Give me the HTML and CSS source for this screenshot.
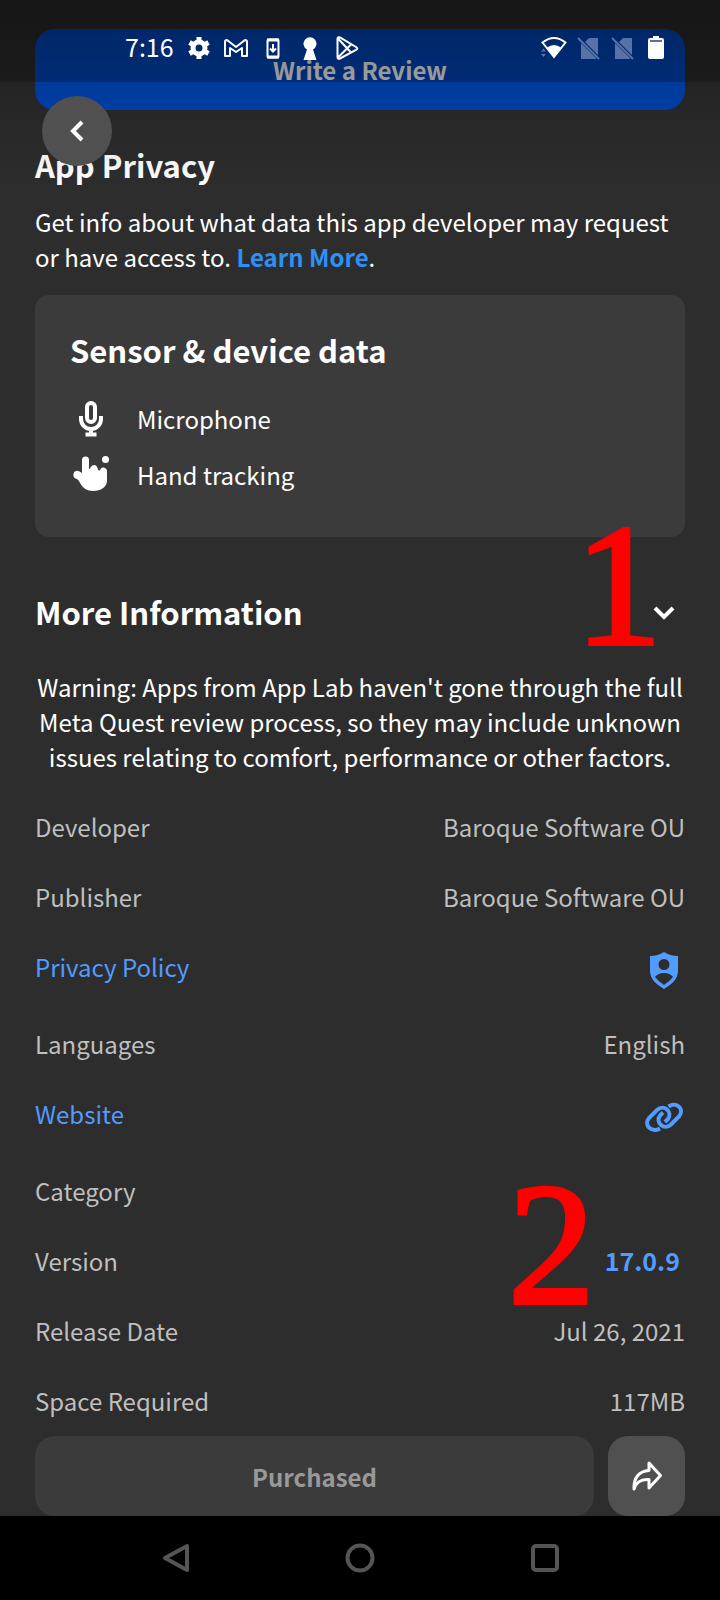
FILE: index.html
```html
<!DOCTYPE html>
<html lang="en">
<head>
<meta charset="utf-8">
<meta name="viewport" content="width=device-width, initial-scale=1">
<title>App details</title>
<link rel="stylesheet" href="styles.css">
</head>
<body>
<div class="screen">
  <main class="content">
    <button class="review" type="button">Write a Review</button>

    <section class="privacy">
      <h2 class="heading">App Privacy</h2>
      <p class="intro">Get info about what data this app developer may request or have access to. <a class="learn" href="#">Learn More</a>.</p>
      <div class="card">
        <h3 class="heading">Sensor &amp; device data</h3>
        <ul class="sensors">
          <li class="sensor">
            <svg class="sensor-icon" viewBox="0 0 42 42" aria-hidden="true"><g fill="none" stroke="#fff" stroke-width="4"><rect x="17" y="6" width="8" height="19" rx="4"/><path d="M11 19v3a10 10 0 0 0 20 0v-3M21 32v6"/><path d="M15.500 37.500h11"/></g></svg>
            <span>Microphone</span>
          </li>
          <li class="sensor">
            <svg class="sensor-icon" viewBox="0 0 42 42" aria-hidden="true"><path fill="#fff" d="M12 20V7q0-3.500 3.500-3.500T19 7v9q1 0 1.500-1.500 1-2.500 3.500-2.500t3.500 3q.5 2.500 1.500 2.500t1.500-1.500q1-2 3-1.500 3.500.5 3.500 4v9c0 6-5.500 10.500-14 10.500-7 0-11-4-13.500-9-1-2-2-3-4-3.500Q3 24.500 3.500 21c.5-3 4-4 6-2.500z"/><circle cx="35.500" cy="6.500" r="3.500" fill="#fff"/></svg>
            <span>Hand tracking</span>
          </li>
        </ul>
      </div>
    </section>

    <section class="more">
      <button class="toggle heading" type="button" aria-expanded="true">
        <span>More Information</span>
        <svg class="chevron" viewBox="0 0 22 14" aria-hidden="true"><path d="M2 2l9 9 9-9" fill="none" stroke="#fff" stroke-width="4"/></svg>
      </button>
      <p class="warning">Warning: Apps from App Lab haven't gone through the full Meta Quest review process, so they may include unknown issues relating to comfort, performance or other factors.</p>
      <dl class="facts">
        <div class="fact"><dt>Developer</dt><dd>Baroque Software OU</dd></div>
        <div class="fact"><dt>Publisher</dt><dd>Baroque Software OU</dd></div>
        <div class="fact"><dt><a class="link" href="#">Privacy Policy</a></dt><dd>
          <svg class="fact-icon" viewBox="0 0 42 42" aria-hidden="true"><path fill="#529bff" fill-rule="evenodd" d="M21 3q6 4 14 4v15c0 8-6 13-14 18C13 35 7 30 7 22V7q8 0 14-4zm0 7a5.500 5.500 0 1 0 0 11 5.500 5.500 0 0 0 0-11zm-9 18q3 4 9 8 6-4 9-8-3-4-9-4t-9 4z"/></svg></dd></div>
        <div class="fact"><dt>Languages</dt><dd>English</dd></div>
        <div class="fact"><dt><a class="link" href="#">Website</a></dt><dd>
          <svg class="fact-icon" viewBox="0 0 42 42" aria-hidden="true"><g fill="none" stroke="#529bff" stroke-width="4"><path d="M17 32.500C9 37 0 29.500 6 22l8-8c7-6.500 16 2 11 9l-3 3"/><path d="M25.500 10.500C33.500 5 42 13 36 20.500l-8 8c-7 6.500-16-2-11-9l3-3"/></g></svg></dd></div>
        <div class="fact"><dt>Category</dt><dd></dd></div>
        <div class="fact"><dt>Version</dt><dd><a class="version" href="#">17.0.9</a></dd></div>
        <div class="fact"><dt>Release Date</dt><dd>Jul 26, 2021</dd></div>
        <div class="fact"><dt>Space Required</dt><dd>117MB</dd></div>
      </dl>
    </section>
  </main>

  <div class="actions">
    <button class="purchased" type="button" disabled>Purchased</button>
    <button class="share" type="button" aria-label="Share"><svg viewBox="0 0 32 32" aria-hidden="true"><path d="M18 3l11.500 12.500L18 28v-8.500C10 19 5 22 3 29 2.500 18 8 11 18 10.500z" fill="none" stroke="#fff" stroke-width="3" stroke-linejoin="round"/></svg></button>
  </div>

  <nav class="navbar">
    <button type="button" aria-label="Back"><svg viewBox="0 0 30 30"><path d="M5 15L27 3v24z"/></svg></button>
    <button type="button" aria-label="Home"><svg viewBox="0 0 30 30"><circle cx="15" cy="15" r="12.500"/></svg></button>
    <button type="button" aria-label="Recent apps"><svg viewBox="0 0 30 30"><rect x="3" y="3" width="24" height="24" rx="3"/></svg></button>
  </nav>

  <div class="shade"></div>
  <div class="statusbar">
    <div class="group">
      <span class="clock">7:16</span>
      <svg viewBox="0 0 26 26" aria-hidden="true"><circle cx="13" cy="13" r="6" fill="none" stroke="#fff" stroke-width="5"/><path d="M13 2v5M13 19v5M3.500 7.500l4.500 2.500M18 16l4.500 2.500M3.500 18.500L8 16M18 10l4.500-2.500" stroke="#fff" stroke-width="5"/></svg>
      <svg viewBox="0 0 26 26" aria-hidden="true"><path d="M2 21V7q0-2 2-2l9 7 9-7q2 0 2 2v14h-5v-8l-6 4-6-4v8z" fill="none" stroke="#fff" stroke-width="2" stroke-linejoin="round"/></svg>
      <svg viewBox="0 0 26 26" aria-hidden="true"><rect x="7.500" y="4.500" width="11" height="18" rx="1" fill="none" stroke="#fff" stroke-width="2"/><path d="M7 5h12M7 22h12" stroke="#fff" stroke-width="3"/><path d="M13 9v7M10 13.500l3 3 3-3" fill="none" stroke="#fff" stroke-width="2"/></svg>
      <svg viewBox="0 0 26 26" aria-hidden="true"><path d="M10 14.500a6.500 6.500 0 1 1 6 0L19.500 25h-13z" fill="#fff"/></svg>
      <svg viewBox="0 0 26 26" aria-hidden="true"><path d="M3.500 4v18q0 2.500 2.500 1.500L22 15q2.500-1.500 0-3L6 2.500q-2.500-1-2.500 1.500zM4 3.500L17 17.500M4 22.500L17 9.500" fill="none" stroke="#fff" stroke-width="2"/></svg>
    </div>
    <div class="group signals">
      <svg viewBox="0 0 26 26" aria-hidden="true"><path d="M1.500 7.500Q13-1.500 24.500 7.500L13 22z" fill="none" stroke="#fff" stroke-width="2"/><path d="M6 12.500q7-5 14 0L13 22z" fill="#fff"/><path d="M0 16.500l2.500-3 2.500 3zM0 19l2.500 3L5 19z" fill="#5672a6"/></svg>
      <svg viewBox="0 0 26 26" aria-hidden="true"><path d="M6 8l15 15v1H6zM14 3h9v17L10 7z" fill="#5672a6"/><path d="M3 3l21 21" stroke="#5672a6" stroke-width="2"/></svg>
      <svg viewBox="0 0 26 26" aria-hidden="true"><path d="M6 8l15 15v1H6zM14 3h9v17L10 7z" fill="#5672a6"/><path d="M3 3l21 21" stroke="#5672a6" stroke-width="2"/></svg>
      <svg viewBox="0 0 26 26" aria-hidden="true"><path d="M10 1h6v2h3q2 0 2 2v17q0 2-2 2H7q-2 0-2-2V5q0-2 2-2h3z" fill="#fff"/><path d="M7 6h12" stroke="#5672a6" stroke-width="2"/></svg>
    </div>
  </div>
  <button class="back" type="button" aria-label="Go back"><svg viewBox="0 0 14 22" aria-hidden="true"><path d="M12 2l-9 9 9 9" fill="none" stroke="#fff" stroke-width="4"/></svg></button>

  <span class="mark mark-one">1</span>
  <span class="mark mark-two">2</span>
</div>
</body>
</html>
```
FILE: styles.css
```css
* { box-sizing: border-box; }
body {
  margin: 0;
  background: #000;
  color: #fff;
  font: 24px/35px "Noto Sans CJK JP", "Noto Sans", sans-serif;
}
h2, h3, p, ul, dl, dd { margin: 0; padding: 0; }
button { border: 0; margin: 0; padding: 0; color: inherit; font: inherit; background: none; }
a { text-decoration: none; }
svg { display: block; flex: none; }

.screen {
  position: relative;
  display: flex;
  flex-direction: column;
  min-height: 100vh;
  background: #2d2d2d;
}
.content { flex: 1; padding: 29px 35px 18px; }
.heading { font-size: 31px; line-height: 40px; font-weight: 700; }

.review {
  display: block;
  width: 100%;
  height: 81px;
  border-radius: 20px;
  background: #0048c0;
  font-weight: 700;
}
.privacy { padding-top: 35px; }
.intro { padding: 19px 0 21px; }
.learn { color: #2d90f5; font-weight: 700; }
.card { padding: 35px 35px 28px; border-radius: 14px; background: #3b3b3b; }
.sensors { list-style: none; padding-top: 27px; }
.sensor { display: flex; gap: 25px; height: 56px; align-items: flex-start; }
.sensor span { padding-top: 4px; }
.sensor-icon { width: 42px; height: 42px; }

.more { padding-top: 54px; }
.toggle {
  display: flex;
  width: 100%;
  height: 44px;
  align-items: center;
  justify-content: space-between;
  padding-right: 10px;
}
.toggle span { padding-bottom: 2px; }
.chevron { width: 22px; height: 14px; }
.warning { padding: 34px 0 35px; text-align: center; }
.facts { display: flex; flex-direction: column; gap: 35px; color: #bfbfbf; }
.fact { display: flex; justify-content: space-between; align-items: flex-start; }
.fact-icon { width: 42px; height: 42px; }
.link { color: #529bff; }
.version { padding-right: 5px; color: #529bff; font-size: 25px; font-weight: 700; }

.actions { display: flex; gap: 14px; padding: 0 35px; }
.actions button { height: 80px; border-radius: 20px; }
.purchased { flex: 1; background: #3b3b3b; color: #999; font-weight: 700; }
.share { display: grid; place-items: center; width: 77px; background: #505050; }
.share svg { width: 32px; height: 32px; }

.navbar {
  display: flex;
  justify-content: center;
  gap: 155px;
  height: 84px;
  align-items: center;
  background: #000;
}
.navbar svg {
  width: 30px;
  height: 30px;
  fill: none;
  stroke: #555;
  stroke-width: 4;
  stroke-linejoin: round;
}

.shade {
  position: absolute;
  inset: 0 0 auto;
  height: 190px;
  background: linear-gradient(rgba(0, 0, 0, .35), transparent);
  pointer-events: none;
}
.statusbar {
  position: absolute;
  inset: 0 0 auto;
  display: flex;
  justify-content: space-between;
  height: 82px;
  padding: 14px 51px 0 125px;
  background: rgba(0, 0, 0, .23);
}
.group { display: flex; align-items: center; gap: 11px; height: 68px; }
.signals { gap: 8px; }
.statusbar svg { width: 26px; height: 26px; }
.clock { padding: 0 1px 4px 0; font-size: 25px; }
.back {
  position: absolute;
  top: 96px;
  left: 42px;
  display: grid;
  place-items: center;
  width: 70px;
  height: 70px;
  border-radius: 50%;
  background: #505050;
}
.back svg { width: 14px; height: 22px; }

.mark {
  position: absolute;
  color: #f00;
  font: 400 174px/174px "Liberation Serif", serif;
  -webkit-text-stroke: 4px #f00;
}
.mark-one { top: 499px; left: 575px; }
.mark-two { top: 1158px; left: 508px; }
```
